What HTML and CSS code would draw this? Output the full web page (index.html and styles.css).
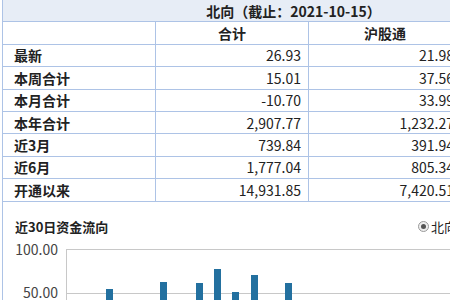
FILE: index.html
```html
<!DOCTYPE html>
<html lang="zh-CN">
<head>
<meta charset="utf-8">
<title>北向资金</title>
<link rel="stylesheet" href="styles.css">
</head>
<body>
<div class="viewport">
  <div class="panel">
    <table class="flow-table">
      <colgroup>
        <col class="c-label"><col class="c-num"><col class="c-num"><col class="c-last">
      </colgroup>
      <thead>
        <tr class="title-row"><th colspan="4">北向（截止：2021-10-15）</th></tr>
        <tr class="head-row"><th></th><th>合计</th><th>沪股通</th><th>深股通</th></tr>
      </thead>
      <tbody>
        <tr><th>最新</th><td>26.93</td><td>21.98</td><td>4.95</td></tr>
        <tr><th>本周合计</th><td>15.01</td><td>37.56</td><td>-22.55</td></tr>
        <tr><th>本月合计</th><td>-10.70</td><td>33.99</td><td>-44.69</td></tr>
        <tr><th>本年合计</th><td>2,907.77</td><td>1,232.27</td><td>1,675.50</td></tr>
        <tr><th>近3月</th><td>739.84</td><td>391.94</td><td>347.90</td></tr>
        <tr><th>近6月</th><td>1,777.04</td><td>805.34</td><td>971.70</td></tr>
        <tr><th>开通以来</th><td>14,931.85</td><td>7,420.51</td><td>7,511.34</td></tr>
      </tbody>
    </table>
    <div class="chart-section">
      <div class="chart-head">
        <span class="chart-title">近30日资金流向</span>
        <span class="radio-group">
          <span class="radio"><span class="radio-dot"></span></span>
          <span class="radio-label">北向</span>
        </span>
      </div>
      <svg class="chart" width="600" height="64" viewBox="0 0 600 64">
        <line x1="63" y1="13.5" x2="600" y2="13.5" class="grid"/>
        <line x1="63" y1="57.5" x2="600" y2="57.5" class="grid"/>
        <line x1="63.5" y1="13" x2="63.5" y2="64" class="axis"/>
        <text x="55" y="19" class="ylabel">100.00</text>
        <text x="55" y="62" class="ylabel">50.00</text>
        <rect x="103" y="53" width="7" height="20" class="bar"/>
        <rect x="157" y="46" width="7" height="27" class="bar"/>
        <rect x="193" y="47" width="7" height="26" class="bar"/>
        <rect x="211" y="33" width="7" height="40" class="bar"/>
        <rect x="229" y="56" width="7" height="17" class="bar"/>
        <rect x="248" y="39" width="7" height="34" class="bar"/>
        <rect x="282" y="47" width="7" height="26" class="bar"/>
      </svg>
    </div>
  </div>
</div>
</body>
</html>
```

FILE: styles.css
```css
html, body {
  margin: 0;
  padding: 0;
  background: #ffffff;
  overflow: hidden;
}

.viewport {
  width: 450px;
  height: 300px;
  overflow: hidden;
  font-family: "Noto Sans CJK SC", "Noto Sans", sans-serif;
  font-size: 14px;
  color: #222222;
}

.panel {
  width: 584px;
  margin-left: 2px;
  margin-top: -1px;
}

.flow-table {
  border-collapse: collapse;
  table-layout: fixed;
  width: 583px;
}

.c-label, .c-num { width: 153px; }
.c-last { width: 123px; }

.flow-table th,
.flow-table td {
  border: 1px solid #adc3e6;
  padding: 0 7px 0 11px;
  height: 21.4px;
  line-height: 18px;
  white-space: nowrap;
}

.flow-table td {
  text-align: right;
  font-weight: normal;
}

.flow-table tbody th {
  text-align: left;
  font-weight: bold;
}

.title-row th {
  background: #e7edf6;
  text-align: center;
  font-weight: bold;
  padding: 0;
}

.head-row th {
  text-align: center;
  font-weight: bold;
  padding: 0;
}

.chart-section {
  border-left: 1px solid #adc3e6;
  height: 120px;
}

.chart-head {
  display: flex;
  justify-content: space-between;
  align-items: center;
  width: 454px;
  padding-top: 15px;
  height: 19px;
}

.chart-title {
  font-size: 13px;
  font-weight: bold;
  padding-left: 12px;
  color: #222222;
}

.radio-group {
  display: flex;
  align-items: center;
  gap: 2px;
  font-size: 13px;
}

.radio {
  width: 9px;
  height: 9px;
  border: 1px solid #9a9a9a;
  border-radius: 50%;
  background: #eeeeee;
  display: flex;
  align-items: center;
  justify-content: center;
}

.radio-dot {
  width: 5px;
  height: 5px;
  border-radius: 50%;
  background: #555555;
}

.radio-label {
  color: #222222;
}

.chart {
  display: block;
  margin-top: 0;
}

.chart .grid {
  stroke: #c8c8c8;
  stroke-width: 1;
}

.chart .axis {
  stroke: #c8c8c8;
  stroke-width: 1;
}

.chart .ylabel {
  font-family: "Noto Sans CJK SC", "Noto Sans", sans-serif;
  font-size: 14px;
  fill: #444444;
  text-anchor: end;
}

.chart .bar {
  fill: #23709f;
}
```
